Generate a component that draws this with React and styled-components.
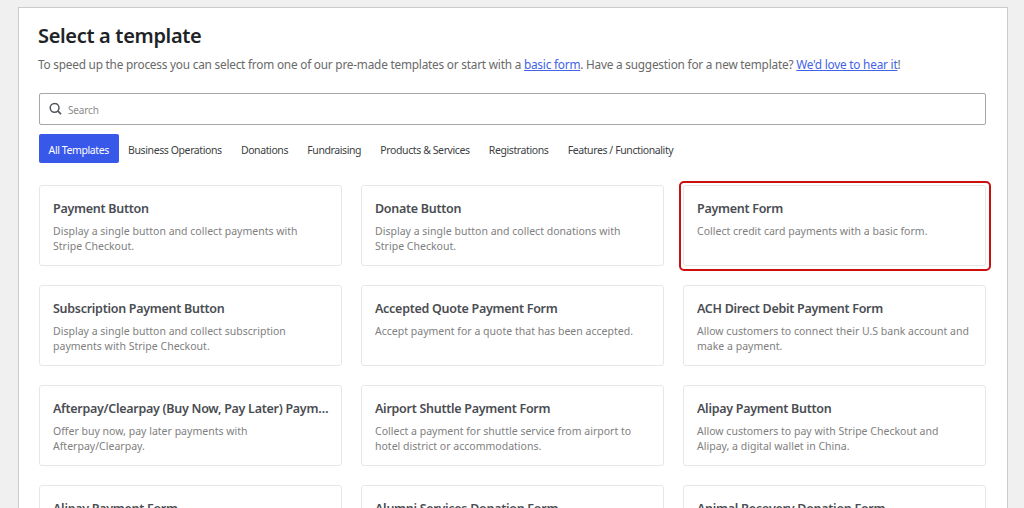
import React from "react";
import styled, { createGlobalStyle } from "styled-components";

const categories = [
  "All Templates",
  "Business Operations",
  "Donations",
  "Fundraising",
  "Products & Services",
  "Registrations",
  "Features / Functionality",
];

const templates = [
  {
    name: "Payment Button",
    desc: "Display a single button and collect payments with Stripe Checkout.",
  },
  {
    name: "Donate Button",
    desc: "Display a single button and collect donations with Stripe Checkout.",
  },
  {
    name: "Payment Form",
    desc: "Collect credit card payments with a basic form.",
    highlighted: true,
  },
  {
    name: "Subscription Payment Button",
    desc: "Display a single button and collect subscription payments with Stripe Checkout.",
  },
  {
    name: "Accepted Quote Payment Form",
    desc: "Accept payment for a quote that has been accepted.",
  },
  {
    name: "ACH Direct Debit Payment Form",
    desc: "Allow customers to connect their U.S bank account and make a payment.",
  },
  {
    name: "Afterpay/Clearpay (Buy Now, Pay Later) Payment Form",
    desc: "Offer buy now, pay later payments with Afterpay/Clearpay.",
  },
  {
    name: "Airport Shuttle Payment Form",
    desc: "Collect a payment for shuttle service from airport to hotel district or accommodations.",
  },
  {
    name: "Alipay Payment Button",
    desc: "Allow customers to pay with Stripe Checkout and Alipay, a digital wallet in China.",
  },
  { name: "Alipay Payment Form", desc: "" },
  { name: "Alumni Services Donation Form", desc: "" },
  { name: "Animal Recovery Donation Form", desc: "" },
];

const TemplateCard = ({ name, desc, highlighted }) => {
  return (
    <StyledCard $highlighted={highlighted}>
      <CardTitle>{name}</CardTitle>
      <CardText>{desc}</CardText>
    </StyledCard>
  );
};

const App = () => {
  return (
    <>
      <GlobalStyle />
      <Page>
        <Panel>
          <Title>Select a template</Title>
          <Intro>
            To speed up the process you can select from one of our pre-made
            templates or start with a <a href="#basic">basic form</a>. Have a
            suggestion for a new template?{" "}
            <a href="#suggest">We'd love to hear it</a>!
          </Intro>
          <SearchBox>
            <svg width="14" height="14" viewBox="0 0 14 14" fill="none">
              <circle cx="5.6" cy="5.8" r="4.4" stroke="#50575e" strokeWidth="1.5" />
              <path d="M8.7 8.9L12 12.2" stroke="#50575e" strokeWidth="1.7" />
            </svg>
            <input type="text" placeholder="Search" />
          </SearchBox>
          <Tabs>
            {categories.map((category, i) => (
              <Tab key={category} $active={i === 0}>
                {category}
              </Tab>
            ))}
          </Tabs>
          <Grid>
            {templates.map((template) => (
              <TemplateCard key={template.name} {...template} />
            ))}
          </Grid>
        </Panel>
      </Page>
    </>
  );
};

const GlobalStyle = createGlobalStyle`
  * {
    box-sizing: border-box;
  }
  body {
    margin: 0;
    overflow: hidden;
    background: #f0f0f0;
    font-family: "Noto Sans", "Open Sans", sans-serif;
  }
`;

const Page = styled.div`
  height: 508px;
  padding: 7px 16px 0 18px;
  overflow: hidden;
`;

const Panel = styled.main`
  height: 620px;
  padding: 14px 21px 0 20px;
  background: #fff;
  border: 1px solid #c9cacc;
`;

const Title = styled.h1`
  margin: 0 0 0 -1px;
  font-size: 20px;
  font-weight: 600;
  line-height: 28px;
  letter-spacing: -0.33px;
  color: #1d2327;
`;

const Intro = styled.p`
  margin: 4px 0 0 -1px;
  font-size: 11.8px;
  line-height: 20px;
  letter-spacing: -0.21px;
  white-space: nowrap;
  color: #696969;
  a {
    color: #4262e8;
    text-decoration: underline;
  }
`;

const SearchBox = styled.label`
  display: flex;
  align-items: center;
  height: 32px;
  margin-top: 19px;
  padding: 0 9px;
  border: 1px solid #a5a7aa;
  border-radius: 2px;
  input {
    flex: 1;
    margin-left: 5px;
    padding: 1px 0 0;
    border: 0;
    outline: 0;
    background: none;
    font-family: inherit;
    font-size: 10px;
    letter-spacing: -0.15px;
  }
  input::placeholder {
    color: #8b8b8b;
  }
`;

const Tabs = styled.nav`
  display: flex;
  margin-top: 9px;
`;

const Tab = styled.button`
  height: 29px;
  padding: 2px 9.6px 0;
  border: 0;
  border-radius: 2px;
  font-family: inherit;
  font-size: 10.5px;
  letter-spacing: -0.4px;
  white-space: nowrap;
  background: ${({ $active }) => ($active ? "#3858e9" : "transparent")};
  color: ${({ $active }) => ($active ? "#fff" : "#3c3f43")};
`;

const Grid = styled.div`
  display: grid;
  grid-template-columns: repeat(3, minmax(0, 1fr));
  grid-auto-rows: 81px;
  gap: 19px;
  margin-top: 22px;
`;

const StyledCard = styled.article`
  position: relative;
  padding: 14px 12px 0 13px;
  border: 1px solid #e6e7e8;
  border-radius: 3px;
  /* red ring around the picked template */
  &::after {
    content: "";
    display: ${({ $highlighted }) => ($highlighted ? "block" : "none")};
    position: absolute;
    inset: -5px -6px -6px -5px;
    border: 2px solid #cc1010;
    border-radius: 5px;
  }
`;

const CardTitle = styled.h2`
  margin: 0;
  font-size: 12.5px;
  font-weight: 600;
  line-height: 18px;
  letter-spacing: -0.28px;
  color: #4a4d52;
  overflow: hidden;
  text-overflow: ellipsis;
  white-space: nowrap;
`;

const CardText = styled.p`
  margin: 6px 0 0;
  font-size: 10.5px;
  line-height: 14.5px;
  letter-spacing: 0.015px;
  color: #808080;
`;

export default App;
